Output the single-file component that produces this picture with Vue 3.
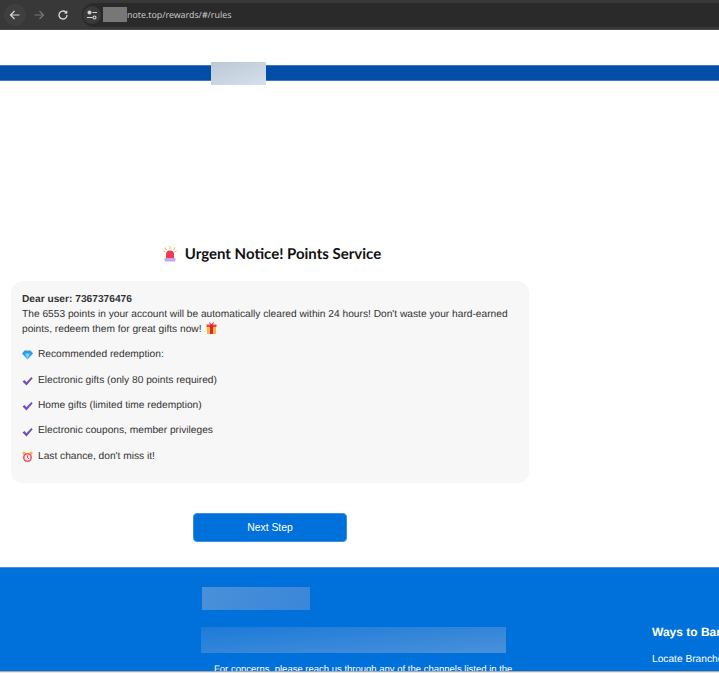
<template>
  <div class="page">
    <!-- Browser toolbar -->
    <div class="toolbar">
      <div class="nav-btn back">
        <svg width="12" height="12" viewBox="0 0 24 24" fill="none" stroke="#d8d8d8" stroke-width="2.4">
          <path d="M21 12H4M11 4l-8 8 8 8" />
        </svg>
      </div>
      <div class="nav-btn">
        <svg width="12" height="12" viewBox="0 0 24 24" fill="none" stroke="#777" stroke-width="2.4">
          <path d="M3 12h17M13 4l8 8-8 8" />
        </svg>
      </div>
      <div class="nav-btn">
        <svg width="12" height="12" viewBox="0 0 24 24" fill="none" stroke="#d8d8d8" stroke-width="2.6">
          <path d="M20 12a8 8 0 1 1-2.6-5.900L20 8.500" />
          <path d="M20.500 2.500v6.500h-6.500" fill="#d8d8d8" stroke="none" />
        </svg>
      </div>
      <div class="address">
        <div class="site-icon">
          <svg width="12" height="12" viewBox="0 0 24 24" fill="none" stroke="#d8d8d8" stroke-width="2.2">
            <circle cx="7" cy="7" r="3" fill="#d8d8d8" />
            <path d="M13 7h9M2 17h11" />
            <circle cx="17" cy="17" r="3" />
          </svg>
        </div>
        <span class="masked"></span>
        <span class="url">note.top/rewards/#/rules</span>
      </div>
    </div>

    <div class="top-space">
      <div class="band"></div>
      <div class="band-mask"></div>
    </div>

    <main class="content">
      <h1 class="title">
        <svg class="siren" width="14" height="16" viewBox="0 0 14 16">
          <path d="M7 0v3M2 1.500l1.500 2.500M12 1.500l-1.500 2.500M.5 5l2 1M13.500 5l-2 1" stroke="#f5b942" stroke-width="1" fill="none" />
          <path d="M3 12V8.500a4 4 0 0 1 8 0V12z" fill="#ee3b55" />
          <rect x="1.500" y="12" width="11" height="3.500" rx=".8" fill="#c9a6e8" />
        </svg>
        <span>Urgent Notice! Points Service</span>
      </h1>

      <section class="card">
        <div class="intro">
          <div class="greeting">Dear user: 7367376476</div>
          <div>
            The 6553 points in your account will be automatically cleared within 24 hours! Don't waste your hard-earned
            points, redeem them for great gifts now!
            <svg class="inline-icon" width="11" height="12" viewBox="0 0 11 12">
              <rect x=".5" y="2.500" width="10" height="2.500" fill="#ef4444" />
              <rect x="1" y="5" width="9" height="7" fill="#f6b73c" />
              <rect x="4" y="2.500" width="3" height="9.500" fill="#d9263f" />
              <path d="M5.500 2.500L3 .5M5.500 2.500L8 .5" stroke="#d9263f" fill="none" />
            </svg>
          </div>
        </div>

        <div class="row">
          <svg width="11" height="10" viewBox="0 0 11 10">
            <path d="M2.500.5h6L11 3.500 5.500 9.500 0 3.500z" fill="#2b9fe6" />
            <path d="M3 3.500h5L5.500 9.500z" fill="#7fd0f7" />
          </svg>
          <span>Recommended redemption:</span>
        </div>
        <div v-for="item in gifts" :key="item" class="row">
          <svg width="11" height="10" viewBox="0 0 11 10">
            <path d="M.5 5.500L2.500 4l2 2.300L9.300 1l1.400 1.300L4.500 9.500z" fill="#7150b8" />
          </svg>
          <span>{{ item }}</span>
        </div>
        <div class="row">
          <svg width="11" height="12" viewBox="0 0 11 12">
            <circle cx="2" cy="2" r="1.600" fill="#f6b73c" />
            <circle cx="9" cy="2" r="1.600" fill="#f6b73c" />
            <circle cx="5.500" cy="6.500" r="4.500" fill="#ee4f6a" />
            <circle cx="5.500" cy="6.500" r="3" fill="#fbe6ea" />
            <path d="M5.500 4.500v2.200l1.500 1" stroke="#c22" stroke-width=".8" fill="none" />
          </svg>
          <span>Last chance, don't miss it!</span>
        </div>
      </section>

      <button class="next-btn">Next Step</button>
    </main>

    <footer class="footer">
      <div class="footer-left">
        <div class="mask-small"></div>
        <div class="mask-wide"></div>
        <p class="concerns">For concerns, please reach us through any of the channels listed in the</p>
      </div>
      <div class="footer-right">
        <h4>Ways to Bank</h4>
        <p>Locate Branches</p>
      </div>
    </footer>
    <div class="bottom-strip"></div>
  </div>
</template>

<script setup>
const gifts = [
  'Electronic gifts (only 80 points required)',
  'Home gifts (limited time redemption)',
  'Electronic coupons, member privileges'
]
</script>

<style>
html,
body {
  margin: 0;
  overflow: hidden;
  background: #fff;
}
</style>

<style scoped>
.page {
  display: flex;
  flex-direction: column;
  width: 719px;
  height: 673px;
  overflow: hidden;
  font-family: "Liberation Sans", Arial, sans-serif;
  text-rendering: geometricPrecision;
}

.toolbar {
  display: flex;
  align-items: center;
  flex-shrink: 0;
  gap: 2px;
  height: 30px;
  padding-left: 4px;
  box-sizing: border-box;
  background: #383838;
  border-bottom: 1px solid #4a4a4a;
}

.nav-btn {
  display: flex;
  align-items: center;
  justify-content: center;
  width: 22px;
  height: 22px;
  border-radius: 50%;
}

.nav-btn.back {
  background: #3f3f3f;
}

.address {
  display: flex;
  flex: 1;
  align-items: center;
  height: 24px;
  margin-left: 6px;
  border-radius: 12px 0 0 12px;
  background: #2a2a2a;
}

.site-icon {
  display: flex;
  align-items: center;
  justify-content: center;
  width: 18px;
  height: 18px;
  margin: 0 2px 0 1px;
  border-radius: 50%;
  background: #3a3a3a;
}

.masked {
  width: 24px;
  height: 15px;
  background: #777;
}

.url {
  color: #c8c8c8;
  font-family: "Noto Sans", sans-serif;
  font-size: 8.8px;
}

.top-space {
  position: relative;
  flex-shrink: 0;
  height: 177px;
  padding-top: 34.5px;
  box-sizing: border-box;
}

.band {
  height: 16px;
  box-sizing: border-box;
  background: #004ea8;
  border-top: 1px solid #3f78c2;
  border-bottom: 1px solid #3f78c2;
}

.band-mask {
  position: absolute;
  top: 32px;
  left: 211px;
  width: 55px;
  height: 23px;
  background: linear-gradient(160deg, #bcc8d6, #d6e0ec);
}

.content {
  display: flex;
  flex-direction: column;
  flex-shrink: 0;
  align-items: center;
  width: 544px;
}

.title {
  display: flex;
  align-items: center;
  gap: 8px;
  height: 74px;
  margin: 0;
  padding-top: 20px;
  box-sizing: border-box;
  color: #111;
  font-family: Lato, sans-serif;
  font-size: 15px;
  font-weight: 700;
}

.card {
  align-self: flex-start;
  width: 518px;
  height: 202px;
  margin-left: 11px;
  padding: 12px 11px;
  box-sizing: border-box;
  border-radius: 12px;
  background: #f7f7f7;
  color: #333;
  font-size: 10.2px;
  line-height: 14.5px;
}

.greeting {
  font-weight: 700;
}

.inline-icon {
  margin-left: 2px;
  vertical-align: -2px;
}

.row {
  display: flex;
  align-items: center;
  gap: 5px;
  height: 15px;
  margin-top: 10.4px;
}

.next-btn {
  align-self: flex-start;
  width: 154px;
  height: 29px;
  margin: 30px 0 0 193px;
  border: 1px solid #3d8fe6;
  border-radius: 4px;
  background: #0071da;
  color: #fff;
  font-family: inherit;
  font-size: 10.4px;
}

.footer {
  display: flex;
  flex: 1;
  min-height: 0;
  margin-top: 25px;
  padding-left: 201px;
  overflow: hidden;
  background: #0071da;
  color: #fff;
  border-top: 1px solid #4a94e4;
}

.footer-left {
  width: 451px;
  flex-shrink: 0;
  padding-top: 19px;
}

.mask-small {
  width: 108px;
  height: 23px;
  margin-left: 1px;
  background: linear-gradient(120deg, #4a90da, #3a86d8);
}

.mask-wide {
  width: 305px;
  height: 26px;
  margin-top: 17px;
  background: linear-gradient(175deg, #1c7bd8, #4a90da);
}

.concerns {
  margin: 10.5px 0 0 13px;
  font-size: 9.5px;
  white-space: nowrap;
}

.footer-right {
  padding-top: 57px;
  white-space: nowrap;
}

.footer-right h4 {
  margin: 0;
  font-size: 12px;
  font-weight: 700;
}

.footer-right p {
  margin: 14.5px 0 0;
  font-size: 10.2px;
}

.bottom-strip {
  flex-shrink: 0;
  height: 2px;
  background: #efe6dc;
  border-top: 1px solid #a8a8a8;
  box-sizing: border-box;
}
</style>
